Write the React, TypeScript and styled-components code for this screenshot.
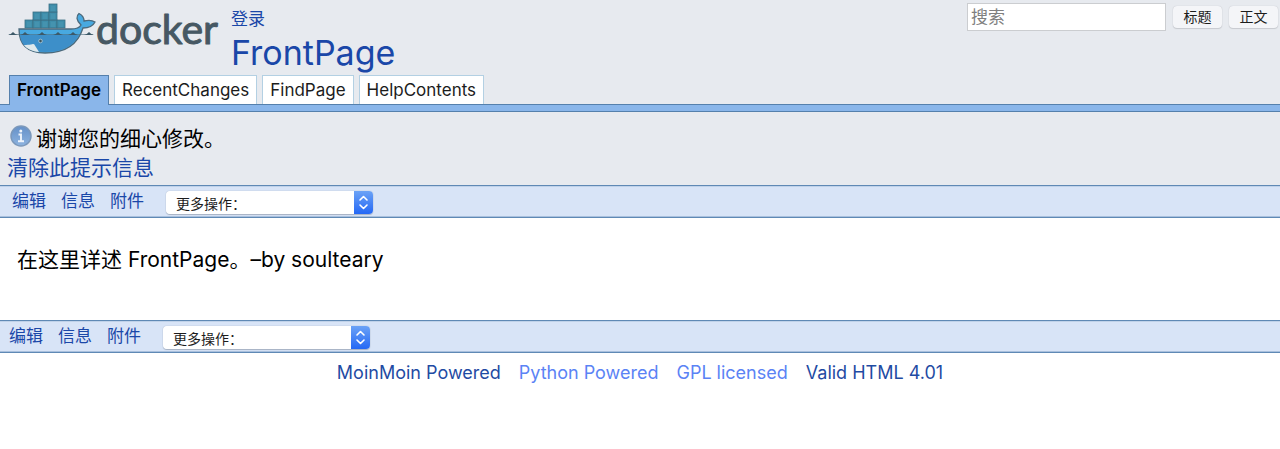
import React from "react";
import styled, { createGlobalStyle } from "styled-components";

const Global = createGlobalStyle`
  * { box-sizing: border-box; }
  body {
    margin: 0;
    background: #fff;
    color: #000;
    font-family: Inter, "Noto Sans CJK SC", sans-serif;
    font-size: 21px;
    line-height: 29px;
  }
  a { color: #1a47a8; text-decoration: none; }
  button, input, select { font-family: inherit; }
`;

const Header = styled.header`
  background: #e7eaef;
`;

const Masthead = styled.div`
  display: flex;
  align-items: flex-start;
  height: 75px;
  padding-left: 8px;
`;

const LogoLink = styled.a`
  display: block;
  width: 223px;
  flex: none;
  svg { display: block; }
`;

const Titles = styled.div`
  flex: 1;
  padding-top: 6px;
`;

const Login = styled.a`
  display: block;
  font-size: 17px;
  line-height: 26px;
`;

const PageTitle = styled.h1`
  margin: 0;
  font-size: 34px;
  line-height: 42px;
  font-weight: 400;
`;

const Search = styled.form`
  display: flex;
  align-items: center;
  gap: 7px;
  padding: 3px 2px 0 0;
`;

const SearchBox = styled.input`
  width: 199px;
  height: 28px;
  padding: 0 3px;
  border: 1px solid #cbcdd0;
  background: #fff;
  font-size: 17px;
  &::placeholder { color: #808080; opacity: 1; }
`;

const SearchButton = styled.button`
  width: 49px;
  height: 22px;
  padding: 0;
  border: 0;
  border-radius: 4px;
  background: #f4f5f8;
  box-shadow: 0 0 1px #b4b8be, 0 1px 1px #c9ccd1;
  color: #1c1c1c;
  font-size: 14px;
  line-height: 22px;
`;

const Tabs = styled.nav`
  display: flex;
  gap: 5px;
  height: 37px;
  padding: 0 9px;
  border-bottom: 1px solid #5580ac;
  background: linear-gradient(#5580ac, #5580ac) 0 29px / 100% 1px no-repeat,
    linear-gradient(#8ab6ea, #8ab6ea) 0 30px / 100% 6px no-repeat;
`;

const Tab = styled.a<{ $active?: boolean }>`
  height: ${(p) => (p.$active ? 30 : 29)}px;
  padding: 0 7px;
  border: 1px solid ${(p) => (p.$active ? "#5580ac" : "#b3d0e3")};
  border-bottom: 0;
  background: ${(p) => (p.$active ? "#8ab6ea" : "#fff")};
  && { color: ${(p) => (p.$active ? "#000" : "#1c1c1c")}; }
  font-size: 17px;
  font-weight: ${(p) => (p.$active ? 600 : 400)};
  line-height: 29px;
`;

const Message = styled.section`
  padding: 12px 7px 3px;
  background: #e7eaef;
`;

const Notice = styled.p`
  display: flex;
  gap: 4px;
  margin: 0;
  padding-left: 3px;
  svg { flex: none; margin-top: 1px; }
`;

const Dismiss = styled.a`
  display: block;
`;

const Bar = styled.div<{ $inset: number }>`
  display: flex;
  align-items: center;
  gap: 15px;
  height: 33px;
  padding-left: ${(p) => p.$inset}px;
  border: solid #5f89b5;
  border-width: 1px 0;
  background: #d8e4f7;
  box-shadow: inset 0 -1px 0 #a9c0dd, inset 0 1px 0 #c0d2e9;
  a { font-size: 17px; line-height: 28px; padding-bottom: 2px; }
`;

const SelectWrap = styled.label`
  position: relative;
  display: block;
  width: 207px;
  height: 23px;
  margin: 2px 0 0 7px;
  border-radius: 4px;
  box-shadow: 0 0 1px #8e9bb0, 0 1px 1px #a9b4c5;
  svg { position: absolute; top: 0; right: 0; pointer-events: none; }
`;

const Actions = styled.select`
  appearance: none;
  display: block;
  width: 100%;
  height: 23px;
  padding: 1px 24px 0 10px;
  border: 0;
  border-radius: 4px;
  background: #fff;
  color: #1c1c1c;
  font-size: 14px;
`;

const Content = styled.main`
  padding: 27px 17px 46px;
  p { margin: 0; }
`;

const Credits = styled.footer`
  display: flex;
  justify-content: center;
  gap: 18px;
  padding: 5px 0;
  font-size: 18px;
`;

const CreditLink = styled.a<{ $light?: boolean }>`
  && { color: ${(p) => (p.$light ? "#5b83f5" : "#1f4ba3")}; }
`;

const crates = [
  [25, 20], [33, 20], [41, 20], [49, 20], [57, 20],
  [33, 12], [41, 12], [49, 12], [49, 4],
];

const waves = [13, 25, 42, 58, 73, 89];

const Logo = () => (
  <svg width="214" height="56" viewBox="0 0 214 56" role="img" aria-label="docker">
    <g transform="translate(-8 0)">
      {crates.map(([x, y]) => (
        <g key={x + "-" + y}>
          <rect x={x} y={y} width="8" height="8" fill="#3e8eab" stroke="#3b6f84" strokeWidth="0.8" />
          <path d={`M${x + 3} ${y + 2}v5M${x + 5} ${y + 2}v5`} stroke="#559fb8" strokeWidth="0.7" />
        </g>
      ))}
      <path d="M19 29H71C76 29 80 27 81 25C76 20 76 16 79 13.500C82 15 84 18 84 21C88 20 92 20 95 22C93 26 88 28 83 28C78 44 65 53 45 53C28 53 19 45 19 29Z" fill="#48a9e0" stroke="#4c6a7c" strokeWidth="1.300" />
      <path d="M20 35H79C73 46 63 52 45 52C29 52 21 46 20 35Z" fill="#3d8fc9" />
      <path d="M24 45C29 45 34 44 34 44L39 52C32 51.500 27 49 24 45Z" fill="#dfe9ec" />
      <circle cx="40.500" cy="41" r="1.800" fill="#3c5560" stroke="#a5c4d2" strokeWidth="0.9" />
      <path d="M9 34.500H93" stroke="#4d6b7b" strokeWidth="0.6" />
      {waves.map((x) => (
        <path key={x} d={`M${x - 5} 35Q${x - 2} 34.500 ${x} 32Q${x + 2} 34.500 ${x + 5} 35Z`} fill="#3c5968" />
      ))}
    </g>
    <text x="88" y="44" fontFamily="Lato, sans-serif" fontSize="41" fill="#465863" stroke="#465863" strokeWidth="1" strokeLinejoin="round">docker</text>
  </svg>
);

const InfoIcon = () => (
  <svg width="22" height="22" viewBox="0 0 22 22" aria-hidden="true">
    <defs>
      <linearGradient id="info" x2="0" y2="1">
        <stop stopColor="#6490c8" /><stop offset="1" stopColor="#8db3df" />
      </linearGradient>
    </defs>
    <circle cx="11" cy="11" r="10" fill="url(#info)" stroke="#7b98bb" strokeWidth="1.500" />
    <circle cx="10.800" cy="6" r="1.500" fill="#eef4fb" />
    <path d="M8.500 9.500H11V16M8 16.200H14" fill="none" stroke="#eef4fb" strokeWidth="1.900" />
  </svg>
);

const ActionBar = ({ inset, id }: { inset: number; id: string }) => (
  <Bar $inset={inset}>
    <a href="#edit">编辑</a>
    <a href="#info">信息</a>
    <a href="#attachments">附件</a>
    <SelectWrap htmlFor={id}>
      <Actions id={id} aria-label="更多操作">
        <option>更多操作：</option>
      </Actions>
      <svg width="19" height="23" viewBox="0 0 19 23" aria-hidden="true">
        <defs>
          <linearGradient id={id + "-fill"} x2="0" y2="1">
            <stop stopColor="#6ba2f6" /><stop offset="1" stopColor="#2468f5" />
          </linearGradient>
        </defs>
        <path d="M0 0H15Q19 0 19 4V19Q19 23 15 23H0Z" fill={`url(#${id}-fill)`} />
        <path d="M6 9L9.500 5.500L13 9M6 14L9.500 17.500L13 14" fill="none" stroke="#fff" strokeWidth="1.600" strokeLinecap="round" strokeLinejoin="round" />
      </svg>
    </SelectWrap>
  </Bar>
);

export default function App() {
  return (
    <>
      <Global />
      <Header>
        <Masthead>
          <LogoLink href="#home"><Logo /></LogoLink>
          <Titles>
            <Login href="#login">登录</Login>
            <PageTitle><a href="#FrontPage">FrontPage</a></PageTitle>
          </Titles>
          <Search>
            <SearchBox type="text" placeholder="搜索" aria-label="搜索" />
            <SearchButton type="button">标题</SearchButton>
            <SearchButton type="button">正文</SearchButton>
          </Search>
        </Masthead>
        <Tabs>
          <Tab href="#FrontPage" $active>FrontPage</Tab>
          <Tab href="#RecentChanges">RecentChanges</Tab>
          <Tab href="#FindPage">FindPage</Tab>
          <Tab href="#HelpContents">HelpContents</Tab>
        </Tabs>
      </Header>
      <Message>
        <Notice><InfoIcon />谢谢您的细心修改。</Notice>
        <Dismiss href="#clear">清除此提示信息</Dismiss>
      </Message>
      <ActionBar inset={12} id="actions-top" />
      <Content><p>在这里详述 FrontPage。–by soulteary</p></Content>
      <ActionBar inset={9} id="actions-bottom" />
      <Credits>
        <CreditLink href="#moinmoin">MoinMoin Powered</CreditLink>
        <CreditLink href="#python" $light>Python Powered</CreditLink>
        <CreditLink href="#gpl" $light>GPL licensed</CreditLink>
        <CreditLink href="#html">Valid HTML 4.01</CreditLink>
      </Credits>
    </>
  );
}
